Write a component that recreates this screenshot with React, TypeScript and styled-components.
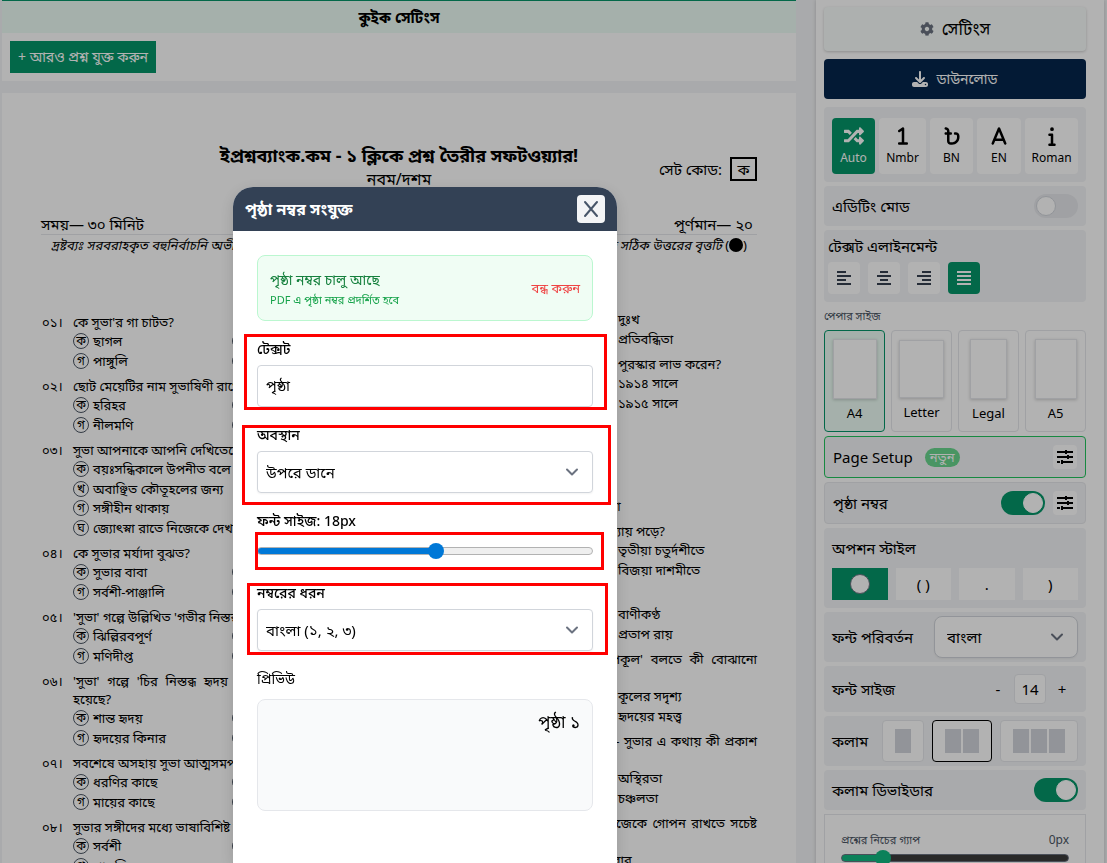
import React, { useState } from 'react';
import styled, { createGlobalStyle, css } from 'styled-components';
import { FaCog, FaRandom } from 'react-icons/fa';
import { FaDownload, Fa1, FaA, FaBangladeshiTakaSign, FaInfo } from 'react-icons/fa6';

const sans = '"Noto Sans", "Noto Sans Bengali", sans-serif';
const green = '#059669';

const GlobalStyle = createGlobalStyle`
  *, *::before, *::after { box-sizing: border-box; }
  body { margin: 0; background: #f3f4f6; font-family: ${sans}; font-size: 15px; line-height: 24px; color: #000; }
  button, input, select { font: inherit; color: inherit; margin: 0; }
  button { border: 0; padding: 0; background: none; cursor: pointer; }
  h1, h2, p, ol, ul { margin: 0; padding: 0; }
  ol, ul { list-style: none; }
`;

const Screen = styled.div`
  display: grid;
  grid-template-columns: minmax(0, 1fr) 288px;
  gap: 20px;
  height: 100vh;
  padding: 0 3px 0 2px;
  overflow: hidden;
`;

/* ---------- main column ---------- */

const Main = styled.main`
  display: flex;
  flex-direction: column;
  gap: 12px;
`;

const QuickPanel = styled.section`
  background: #fff;
  border-top: 1px solid ${green};
`;

const QuickTitle = styled.h2`
  padding: 4px 0;
  background: #ecfdf5;
  font-size: 15px;
  line-height: 24px;
  text-align: center;
`;

const QuickBody = styled.div`
  padding: 8px;
`;

const AddButton = styled.button`
  height: 32px;
  padding: 0 8px;
  background: ${green};
  color: #fff;
  font-size: 14px;
  white-space: nowrap;
`;

const Paper = styled.article`
  flex: 1;
  min-height: 0;
  padding: 48px 39px 0 39px;
  background: #fff;
  overflow: hidden;
`;

const PaperHead = styled.header`
  display: grid;
  grid-template-columns: 1fr auto 1fr;
  align-items: start;
  height: 70px;
  text-align: center;
`;

const PaperTitle = styled.h1`
  grid-column: 2;
  font-size: 18px;
  line-height: 28px;
  white-space: nowrap;
`;

const PaperClass = styled.p`
  font-size: 16px;
  line-height: 20px;
`;

const SetCode = styled.div`
  display: flex;
  align-items: center;
  justify-content: flex-end;
  gap: 8px;
  padding-top: 16px;
  white-space: nowrap;
`;

const CodeBox = styled.span`
  width: 27px;
  height: 24px;
  border: 2px solid #000;
  line-height: 20px;
  text-align: center;
`;

const MetaRow = styled.div`
  display: flex;
  justify-content: space-between;
  padding: 3px 4px 0 0;
  border-bottom: 1px solid #e5e7eb;
  line-height: 20px;
`;

const Note = styled.p`
  display: flex;
  justify-content: space-between;
  padding: 0 10px;
  font-size: 13px;
  line-height: 20px;
  white-space: nowrap;
`;

const NoteEnd = styled.span`
  display: flex;
  align-items: center;
`;

const Dot = styled.span`
  width: 14px;
  height: 14px;
  border-radius: 50%;
  background: #000;
`;

const Columns = styled.div`
  display: grid;
  grid-template-columns: 1fr 1fr;
  gap: 16px;
  padding-top: 36px;
`;

const QuestionList = styled.ol<{ $lead?: boolean }>`
  display: flex;
  flex-direction: column;
  gap: 7px;
  padding-top: ${(p) => (p.$lead ? 22 : 0)}px;
  font-size: 13px;
  line-height: 18px;
`;

const QuestionItem = styled.li`
  display: grid;
  grid-template-columns: 32px minmax(0, 1fr);
`;

const QuestionText = styled.p`
  text-align: justify;
`;

const QuestionNo = styled.span`
  padding-left: 1px;
`;

const Options = styled.ul<{ $cols: number }>`
  grid-column: 2;
  display: grid;
  grid-template-columns: repeat(${(p) => p.$cols}, minmax(0, 1fr));
  grid-auto-rows: 20px 19px;
`;

const Option = styled.li`
  display: flex;
  align-items: center;
  gap: 4px;
  white-space: nowrap;
`;

const Marker = styled.span`
  display: flex;
  flex: none;
  align-items: center;
  justify-content: center;
  width: 16px;
  height: 16px;
  border: 1px solid #4b5563;
  border-radius: 50%;
  font-size: 12px;
  line-height: 14px;
`;

/* ---------- sidebar ---------- */

const Sidebar = styled.aside`
  display: flex;
  flex-direction: column;
  gap: 4px;
  padding: 7px 18px 0 8px;
  background: #fff;
  box-shadow: 0 0 4px rgba(0, 0, 0, 0.2);
  overflow: hidden;

  > * { flex: none; }
`;

const wide = css`
  display: flex;
  align-items: center;
  justify-content: center;
  gap: 8px;
  margin-bottom: 4px;
  border-radius: 4px;
`;

const SettingsButton = styled.button`
  ${wide}
  height: 44px;
  background: #f8fdfb;
  box-shadow: 0 1px 3px rgba(0, 0, 0, 0.2);
  font-size: 17px;

  svg { color: #6b7280; width: 14px; height: 14px; }
`;

const DownloadButton = styled.button`
  ${wide}
  height: 40px;
  background: #05264c;
  color: #fff;
  font-size: 14px;

  svg { width: 16px; height: 16px; }
`;

const Panel = styled.section<{ $h: number; $border?: string }>`
  display: flex;
  align-items: center;
  justify-content: space-between;
  min-height: ${(p) => p.$h}px;
  padding: 0 8px;
  border: ${(p) => (p.$border ? `1px solid ${p.$border}` : '0')};
  border-radius: 4px;
  background: #f3f4f6;
`;

const StackPanel = styled.section<{ $h: number; $pad: string; $gap?: number }>`
  display: flex;
  flex-direction: column;
  gap: ${(p) => p.$gap ?? 4}px;
  min-height: ${(p) => p.$h}px;
  padding: ${(p) => p.$pad};
  border-radius: 4px;
  background: #f3f4f6;
`;

const ModeRow = styled.div`
  display: grid;
  grid-template-columns: 43fr 47fr 43fr 44fr 53fr;
  gap: 4px;
`;

const ModeButton = styled.button<{ $active?: boolean }>`
  display: flex;
  flex-direction: column;
  align-items: center;
  justify-content: center;
  gap: 4px;
  height: 56px;
  border-radius: 4px;
  background: ${(p) => (p.$active ? green : '#fff')};
  color: ${(p) => (p.$active ? '#fff' : '#000')};
  font-size: 12px;
  line-height: 16px;

  svg { width: 20px; height: 20px; }
`;

const Switch = styled.label`
  position: relative;
  display: block;
  width: 44px;
  height: 24px;

  input {
    appearance: none;
    display: block;
    width: 44px;
    height: 24px;
    border-radius: 12px;
    background: #e5e7eb;
  }
  input::after {
    content: '';
    position: absolute;
    top: 2px;
    left: 2px;
    width: 20px;
    height: 20px;
    border: 1px solid #d1d5db;
    border-radius: 50%;
    background: #fff;
  }
  input:checked { background: ${green}; }
  input:checked::after { left: 22px; border-color: #fff; }
`;

const ButtonRow = styled.div<{ $gap: number }>`
  display: flex;
  align-items: center;
  gap: ${(p) => p.$gap}px;
`;

const IconButton = styled.button<{ $size: number; $active?: boolean }>`
  display: flex;
  align-items: center;
  justify-content: center;
  width: ${(p) => p.$size}px;
  height: ${(p) => p.$size}px;
  border-radius: 4px;
  background: ${(p) => (p.$active ? green : '#fff')};
  color: ${(p) => (p.$active ? '#fff' : '#374151')};
`;

const SmallLabel = styled.p`
  font-size: 11px;
  line-height: 20px;
  color: #4b5563;
`;

const SizeGrid = styled.div`
  display: grid;
  grid-template-columns: repeat(4, minmax(0, 1fr));
  gap: 6px;
`;

const SizeCard = styled.button<{ $active?: boolean }>`
  display: flex;
  flex-direction: column;
  align-items: center;
  justify-content: center;
  gap: 4px;
  height: 102px;
  border: 1px solid ${(p) => (p.$active ? green : '#e5e7eb')};
  border-radius: 4px;
  background: ${(p) => (p.$active ? '#ecfdf5' : '#fff')};
  font-size: 13px;
  line-height: 20px;
`;

const Sheet = styled.span<{ $w: number; $h: number }>`
  width: ${(p) => p.$w}px;
  height: ${(p) => p.$h}px;
  border: 1px solid #e5e7eb;
  background: #fff;
  box-shadow: 0 1px 3px rgba(0, 0, 0, 0.2);
`;

const Badge = styled.span`
  padding: 0 5px;
  border-radius: 10px;
  background: #69d68f;
  color: #fff;
  font-size: 13px;
  line-height: 19px;
`;

const StyleGrid = styled.div`
  display: grid;
  grid-template-columns: repeat(4, minmax(0, 1fr));
  gap: 8px;
`;

const StyleButton = styled.button<{ $active?: boolean }>`
  display: flex;
  align-items: center;
  justify-content: center;
  height: 32px;
  background: ${(p) => (p.$active ? green : '#fff')};
`;

const Ring = styled.span`
  width: 20px;
  height: 20px;
  border: 1px solid #6b7280;
  border-radius: 50%;
  background: #fff;
`;

const SelectWrap = styled.span<{ $w?: number; $r: number }>`
  position: relative;
  display: block;
  width: ${(p) => (p.$w ? `${p.$w}px` : '100%')};

  select {
    appearance: none;
    width: 100%;
    height: 42px;
    padding: 0 ${(p) => (p.$w ? 12 : 8)}px;
    border: 1px solid #d1d5db;
    border-radius: ${(p) => p.$r}px;
    background: #fff;
    box-shadow: 0 1px 2px rgba(0, 0, 0, 0.05);
  }
  svg {
    position: absolute;
    top: 17px;
    right: 14px;
    pointer-events: none;
  }
`;

const StepButton = styled.button`
  width: 32px;
  height: 30px;
`;

const SizeInput = styled.input`
  width: 32px;
  height: 30px;
  padding: 0;
  border: 1px solid #e5e7eb;
  border-radius: 4px;
  background: #fff;
  text-align: center;
`;

const ColumnButton = styled.button<{ $active?: boolean }>`
  display: flex;
  align-items: center;
  gap: 2px;
  height: 42px;
  padding: 0 12px;
  border: 1px solid ${(p) => (p.$active ? '#000' : '#e5e7eb')};
  border-radius: 4px;
  background: #fff;

  span { width: 16px; height: 24px; background: #d1d5db; }
`;

const GapPanel = styled.section`
  padding: 15px 16px;
  border: 1px solid #e5e7eb;
  background: #fff;
  font-size: 11px;
  line-height: 20px;
  color: #4b5563;
`;

const Spread = styled.div`
  display: flex;
  justify-content: space-between;

  span { font-size: 12px; }
`;

const Range = styled.input<{ $fill: string; $rest: string; $edge: string }>`
  appearance: none;
  display: block;
  width: 100%;
  height: 16px;
  background: none;

  &::-webkit-slider-runnable-track {
    height: 8px;
    border: 1px solid ${(p) => p.$edge};
    border-radius: 4px;
    background: linear-gradient(to right, ${(p) => p.$fill} var(--fill), ${(p) => p.$rest} var(--fill)) border-box;
  }
  &::-webkit-slider-thumb {
    appearance: none;
    width: 16px;
    height: 16px;
    margin-top: -5px;
    border-radius: 50%;
    background: ${(p) => p.$fill};
  }
`;

/* ---------- dialog ---------- */

const Overlay = styled.div`
  position: fixed;
  inset: 0;
  display: flex;
  justify-content: center;
  padding: 187px 257px 0 0;
  background: rgba(0, 0, 0, 0.3);
`;

const Dialog = styled.section`
  position: relative;
  width: 384px;
  border-radius: 20px 20px 0 0;
  background: #fff;
  box-shadow: 0 4px 16px rgba(0, 0, 0, 0.15);
`;

const DialogHead = styled.header`
  display: flex;
  align-items: center;
  justify-content: space-between;
  height: 44px;
  padding: 0 12px;
  border-radius: 20px 20px 0 0;
  background: #334155;
  color: #fff;

  h2 { font-size: 16px; line-height: 28px; }
`;

const CloseButton = styled.button`
  display: flex;
  align-items: center;
  justify-content: center;
  width: 28px;
  height: 28px;
  border-radius: 4px;
  background: #f3f4f6;
  color: #475569;
`;

const DialogBody = styled.div`
  display: flex;
  flex-direction: column;
  gap: 16px;
  padding: 24px;
`;

const Notice = styled.div`
  display: flex;
  align-items: center;
  justify-content: space-between;
  height: 66px;
  padding: 0 12px;
  border: 1px solid #bbf7d0;
  border-radius: 8px;
  background: #f0fdf4;
  color: #15803d;
  font-size: 14px;

  small { display: block; font-size: 11px; line-height: 16px; color: #16a34a; }
  button { font-size: 13px; color: #ef4444; }
`;

const Field = styled.div<{ $gap?: number }>`
  display: flex;
  flex-direction: column;
  gap: ${(p) => p.$gap ?? 4}px;

  label, > span:first-child { font-size: 14px; }
  label { font-weight: 500; }
`;

const TextInput = styled.input`
  height: 42px;
  padding: 0 8px;
  border: 1px solid #d1d5db;
  border-radius: 4px;
  background: #fff;
`;

const RangeSlot = styled.div`
  display: flex;
  align-items: center;
  height: 28px;
`;

const Preview = styled.div`
  height: 112px;
  padding: 8px 12px;
  border: 1px solid #e5e7eb;
  border-radius: 8px;
  background: #f9fafb;
  font-size: 17px;
  line-height: 28px;
  text-align: right;
`;

const Highlight = styled.span<{ $x: number; $y: number; $w: number; $h: number }>`
  position: absolute;
  left: ${(p) => p.$x}px;
  top: ${(p) => p.$y}px;
  width: ${(p) => p.$w}px;
  height: ${(p) => p.$h}px;
  border: 3px solid #f00;
  pointer-events: none;
`;

/* ---------- icons ---------- */

const Chevron = () => (
  <svg width="14" height="8" viewBox="0 0 14 8" fill="none" stroke="#6b7280" strokeWidth="2" strokeLinecap="round" strokeLinejoin="round">
    <path d="M2 1.5 7 6.5 12 1.5" />
  </svg>
);

const Cross = () => (
  <svg width="16" height="18" viewBox="0 0 16 18" fill="none" stroke="currentColor" strokeWidth="2" strokeLinecap="round">
    <path d="M2 2 14 16M14 2 2 16" />
  </svg>
);

const Sliders = () => (
  <svg width="16" height="16" viewBox="0 0 16 16" fill="none" stroke="#000" strokeWidth="2">
    <path d="M0 3H8M10 3H16M0 8H10M12 8H16M0 13H3M5 13H16" />
    <path d="M9 1V5M11 6V10M5 11V15" />
  </svg>
);

const alignPaths: Record<string, string> = {
  left: 'M0 2H9M0 6H14M0 10H9M0 14H14',
  center: 'M3 2H11M0 6H14M3 10H11M0 14H14',
  right: 'M5 2H14M0 6H14M5 10H14M0 14H14',
  justify: 'M0 2H14M0 6H14M0 10H14M0 14H14',
};

const AlignIcon = ({ kind }: { kind: string }) => (
  <svg width="14" height="16" viewBox="0 0 14 16" fill="none" stroke="currentColor" strokeWidth="2">
    <path d={alignPaths[kind]} />
  </svg>
);

/* ---------- data ---------- */

type Question = { no: string; text: string; options: string[]; cols?: number };

const leftQuestions: Question[] = [
  { no: '০১।', text: "কে সুভা'র গা চাটত?", options: ['ছাগল', 'গাভী', 'পাঙ্গুলি', 'বিড়াল'] },
  { no: '০২।', text: 'ছোট মেয়েটির নাম সুভাষিণী রাখেন কে?', options: ['হরিহর', 'বাণীকণ্ঠ', 'নীলমণি', 'প্রতাপ'] },
  {
    no: '০৩।',
    text: 'সুভা আপনাকে আপনি দেখিতেছে কেন?',
    options: ['বয়ঃসন্ধিকালে উপনীত বলে', 'অবাঞ্ছিত কৌতূহলের জন্য', 'সঙ্গীহীন থাকায়', 'জ্যোৎস্না রাতে নিজেকে দেখতে'],
    cols: 1,
  },
  { no: '০৪।', text: 'কে সুভার মর্যাদা বুঝত?', options: ['সুভার বাবা', 'প্রতাপ', 'সর্বশী-পাঞ্জালি', 'সুভার মা'] },
  { no: '০৫।', text: "'সুভা' গল্পে উল্লিখিত 'গভীর নিস্তব্ধ' কী?", options: ['ঝিল্লিরবপূর্ণ', 'নদীতীর', 'মণিদীপ্ত', 'জনহীন'] },
  { no: '০৬।', text: "'সুভা' গল্পে 'চির নিস্তব্ধ হৃদয় উপকূল' বলতে কী বোঝানো হয়েছে?", options: ['শান্ত হৃদয়', 'নীরবতা', 'হৃদয়ের কিনার', 'নদীতীর'] },
  { no: '০৭।', text: 'সবশেষে অসহায় সুভা আত্মসমর্পণ করে কোথায়?', options: ['ধরণির কাছে', 'বাবার কাছে', 'মায়ের কাছে', 'প্রতাপের কাছে'] },
  { no: '০৮।', text: 'সুভার সঙ্গীদের মধ্যে ভাষাবিশিষ্ট জীব কে?', options: ['সর্বশী', 'প্রতাপ', 'পাঙ্গুলি', 'বিড়াল'] },
];

const rightQuestions: Question[] = [
  { no: '০৯।', text: 'সুভার মনে কী ছিল?', options: ['আনন্দ', 'দুঃখ', 'ভয়', 'প্রতিবন্ধিতা'] },
  { no: '১০।', text: 'রবীন্দ্রনাথ ঠাকুর কত সালে নোবেল পুরস্কার লাভ করেন?', options: ['১৯১৩ সালে', '১৯১৪ সালে', '১৯১২ সালে', '১৯১৫ সালে'] },
  {
    no: '১১।',
    text: 'সুভা কেমন মেয়ে?',
    options: ['শান্ত', 'চঞ্চল', 'নীরব', 'মানুষের সঙ্গেও মিশতে না চাওয়া'],
    cols: 1,
  },
  { no: '১২।', text: 'সুভা কোন তিথিতে নদীর তীরের শয্যায় পড়ে?', options: ['পূর্ণিমাতে', 'তৃতীয়া চতুর্দশীতে', 'দ্বাদশীতে', 'বিজয়া দাশমীতে'] },
  { no: '১৩।', text: 'সুভার বাবার নাম কী?', options: ['নীলমণি', 'বাণীকণ্ঠ', 'হরিহর', 'প্রতাপ রায়'] },
  { no: '১৪।', text: "'সুভা' গল্পে 'চির নিস্তব্ধ হৃদয় উপকূল' বলতে কী বোঝানো হয়েছে?", options: ['নদীর তীর', 'কূলের সদৃশ্য', 'শান্ত মন', 'হৃদয়ের মহত্ত্ব'] },
  { no: '১৫।', text: "'তুমি আমাকে যাইতে দিয়ো না, মা'- সুভার এ কথায় কী প্রকাশ পেয়েছে?", options: ['ব্যাকুলতা', 'অস্থিরতা', 'ভালোবাসা', 'চঞ্চলতা'] },
  { no: '১৬।', text: 'সুভা সবসময় কেন সবার থেকে নিজেকে গোপন রাখতে সচেষ্ট থাকত বলে মনে হয়?', options: ['নিজেকে বিধাতার অভিশাপ ভাবার', 'ভয়ে'], cols: 1 },
];

const markers = ['ক', 'খ', 'গ', 'ঘ'];

const Questions = ({ items, lead }: { items: Question[]; lead?: boolean }) => (
  <QuestionList $lead={lead}>
    {items.map((q) => (
      <QuestionItem key={q.no}>
        <QuestionNo>{q.no}</QuestionNo>
        <QuestionText>{q.text}</QuestionText>
        <Options $cols={q.cols ?? 2}>
          {q.options.map((o, i) => (
            <Option key={o}>
              <Marker>{markers[i]}</Marker>
              {o}
            </Option>
          ))}
        </Options>
      </QuestionItem>
    ))}
  </QuestionList>
);

const Toggle = ({ label, on }: { label: string; on?: boolean }) => (
  <Switch>
    <input type="checkbox" role="switch" aria-label={label} defaultChecked={on} />
  </Switch>
);

export default function App() {
  const [fontSize, setFontSize] = useState(18);
  const [gap, setGap] = useState(0);

  return (
    <>
      <GlobalStyle />
      <Screen>
        <Main>
          <QuickPanel>
            <QuickTitle>কুইক সেটিংস</QuickTitle>
            <QuickBody>
              <AddButton>+ আরও প্রশ্ন যুক্ত করুন</AddButton>
            </QuickBody>
          </QuickPanel>
          <Paper>
            <PaperHead>
              <span />
              <div>
                <PaperTitle>ইপ্রশ্নব্যাংক.কম - ১ ক্লিকে প্রশ্ন তৈরীর সফটওয়্যার!</PaperTitle>
                <PaperClass>নবম/দশম</PaperClass>
              </div>
              <SetCode>
                সেট কোড: <CodeBox>ক</CodeBox>
              </SetCode>
            </PaperHead>
            <MetaRow>
              <span>সময়— ৩০ মিনিট</span>
              <span>পূর্ণমান— ২০</span>
            </MetaRow>
            <Note>
              <em>দ্রষ্টব্যঃ সরবরাহকৃত বহুনির্বাচনি অভীক্ষার উত্তরপত্রে</em>
              <NoteEnd>
                <em>প্রশ্নের বিপরীতে প্রদত্ত সঠিক উত্তরের বৃত্তটি</em>&nbsp;(<Dot />)
              </NoteEnd>
            </Note>
            <Columns>
              <Questions items={leftQuestions} lead />
              <Questions items={rightQuestions} />
            </Columns>
          </Paper>
        </Main>

        <Sidebar>
          <SettingsButton>
            <FaCog /> সেটিংস
          </SettingsButton>
          <DownloadButton>
            <FaDownload /> ডাউনলোড
          </DownloadButton>
          <StackPanel $h={75} $pad="11px 8px 8px">
            <ModeRow>
              <ModeButton $active><FaRandom />Auto</ModeButton>
              <ModeButton><Fa1 />Nmbr</ModeButton>
              <ModeButton><FaBangladeshiTakaSign />BN</ModeButton>
              <ModeButton><FaA />EN</ModeButton>
              <ModeButton><FaInfo />Roman</ModeButton>
            </ModeRow>
          </StackPanel>
          <Panel $h={40}>
            <span>এডিটিং মোড</span>
            <Toggle label="এডিটিং মোড" />
          </Panel>
          <StackPanel $h={72} $pad="4px">
            <span>টেক্সট এলাইনমেন্ট</span>
            <ButtonRow $gap={8}>
              {Object.keys(alignPaths).map((kind) => (
                <IconButton key={kind} $size={32} $active={kind === 'justify'} aria-label={kind}>
                  <AlignIcon kind={kind} />
                </IconButton>
              ))}
            </ButtonRow>
          </StackPanel>
          <SmallLabel>পেপার সাইজ</SmallLabel>
          <SizeGrid>
            <SizeCard $active><Sheet $w={44} $h={60} />A4</SizeCard>
            <SizeCard><Sheet $w={45} $h={58} />Letter</SizeCard>
            <SizeCard><Sheet $w={37} $h={60} />Legal</SizeCard>
            <SizeCard><Sheet $w={42} $h={60} />A5</SizeCard>
          </SizeGrid>
          <Panel $h={42} $border="#22c55e">
            <ButtonRow $gap={12}>
              Page Setup <Badge>নতুন</Badge>
            </ButtonRow>
            <IconButton $size={24} aria-label="Page Setup"><Sliders /></IconButton>
          </Panel>
          <Panel $h={42} $border="#e5e7eb">
            <span>পৃষ্ঠা নম্বর</span>
            <ButtonRow $gap={8}>
              <Toggle label="পৃষ্ঠা নম্বর" on />
              <IconButton $size={24} aria-label="পৃষ্ঠা নম্বর"><Sliders /></IconButton>
            </ButtonRow>
          </Panel>
          <StackPanel $h={80} $pad="8px" $gap={8}>
            <span>অপশন স্টাইল</span>
            <StyleGrid>
              <StyleButton $active aria-label="circle"><Ring /></StyleButton>
              <StyleButton>( )</StyleButton>
              <StyleButton>.</StyleButton>
              <StyleButton>)</StyleButton>
            </StyleGrid>
          </StackPanel>
          <Panel $h={50}>
            <label htmlFor="font">ফন্ট পরিবর্তন</label>
            <SelectWrap $w={144} $r={8}>
              <select id="font"><option>বাংলা</option></select>
              <Chevron />
            </SelectWrap>
          </Panel>
          <Panel $h={46}>
            <label htmlFor="size">ফন্ট সাইজ</label>
            <ButtonRow $gap={0}>
              <StepButton>-</StepButton>
              <SizeInput id="size" defaultValue="14" />
              <StepButton>+</StepButton>
            </ButtonRow>
          </Panel>
          <Panel $h={50}>
            <span>কলাম</span>
            <ButtonRow $gap={8}>
              <ColumnButton aria-label="1"><span /></ColumnButton>
              <ColumnButton $active aria-label="2"><span /><span /></ColumnButton>
              <ColumnButton aria-label="3"><span /><span /><span /></ColumnButton>
            </ButtonRow>
          </Panel>
          <Panel $h={40}>
            <span>কলাম ডিভাইডার</span>
            <Toggle label="কলাম ডিভাইডার" on />
          </Panel>
          <GapPanel>
            <Spread>
              <label htmlFor="gap">প্রশ্নের নিচের গ্যাপ</label>
              <span>{gap}px</span>
            </Spread>
            <Range
              id="gap"
              type="range"
              min={-3}
              max={16}
              value={gap}
              onChange={(e) => setGap(Number(e.target.value))}
              $fill="#10b981"
              $rest="#3b3b3b"
              $edge="#6b7280"
              style={{ '--fill': `${((gap + 3) / 19) * 100}%` } as React.CSSProperties}
            />
          </GapPanel>
        </Sidebar>
      </Screen>

      <Overlay>
        <Dialog role="dialog" aria-labelledby="dialog-title">
          <DialogHead>
            <h2 id="dialog-title">পৃষ্ঠা নম্বর সংযুক্ত</h2>
            <CloseButton aria-label="Close"><Cross /></CloseButton>
          </DialogHead>
          <DialogBody>
            <Notice>
              <div>
                পৃষ্ঠা নম্বর চালু আছে
                <small>PDF এ পৃষ্ঠা নম্বর প্রদর্শিত হবে</small>
              </div>
              <button>বন্ধ করুন</button>
            </Notice>
            <Field>
              <label htmlFor="text">টেক্সট</label>
              <TextInput id="text" defaultValue="পৃষ্ঠা" />
            </Field>
            <Field>
              <label htmlFor="place">অবস্থান</label>
              <SelectWrap $r={4}>
                <select id="place"><option>উপরে ডানে</option></select>
                <Chevron />
              </SelectWrap>
            </Field>
            <Field>
              <label htmlFor="number-size">ফন্ট সাইজ: {fontSize}px</label>
              <RangeSlot>
                <Range
                  id="number-size"
                  type="range"
                  min={10}
                  max={25}
                  value={fontSize}
                  onChange={(e) => setFontSize(Number(e.target.value))}
                  $fill="#0078d7"
                  $rest="#efefef"
                  $edge="#b2b2b2"
                  style={{ '--fill': `${((fontSize - 10) / 15) * 100}%` } as React.CSSProperties}
                />
              </RangeSlot>
            </Field>
            <Field>
              <label htmlFor="kind">নম্বরের ধরন</label>
              <SelectWrap $r={4}>
                <select id="kind"><option>বাংলা (১, ২, ৩)</option></select>
                <Chevron />
              </SelectWrap>
            </Field>
            <Field $gap={8}>
              <span>প্রিভিউ</span>
              <Preview>পৃষ্ঠা ১</Preview>
            </Field>
          </DialogBody>
          <Highlight $x={11} $y={147} $w={363} $h={76} />
          <Highlight $x={9} $y={238} $w={369} $h={80} />
          <Highlight $x={22} $y={345} $w={349} $h={38} />
          <Highlight $x={14} $y={396} $w={361} $h={72} />
        </Dialog>
      </Overlay>
    </>
  );
}
